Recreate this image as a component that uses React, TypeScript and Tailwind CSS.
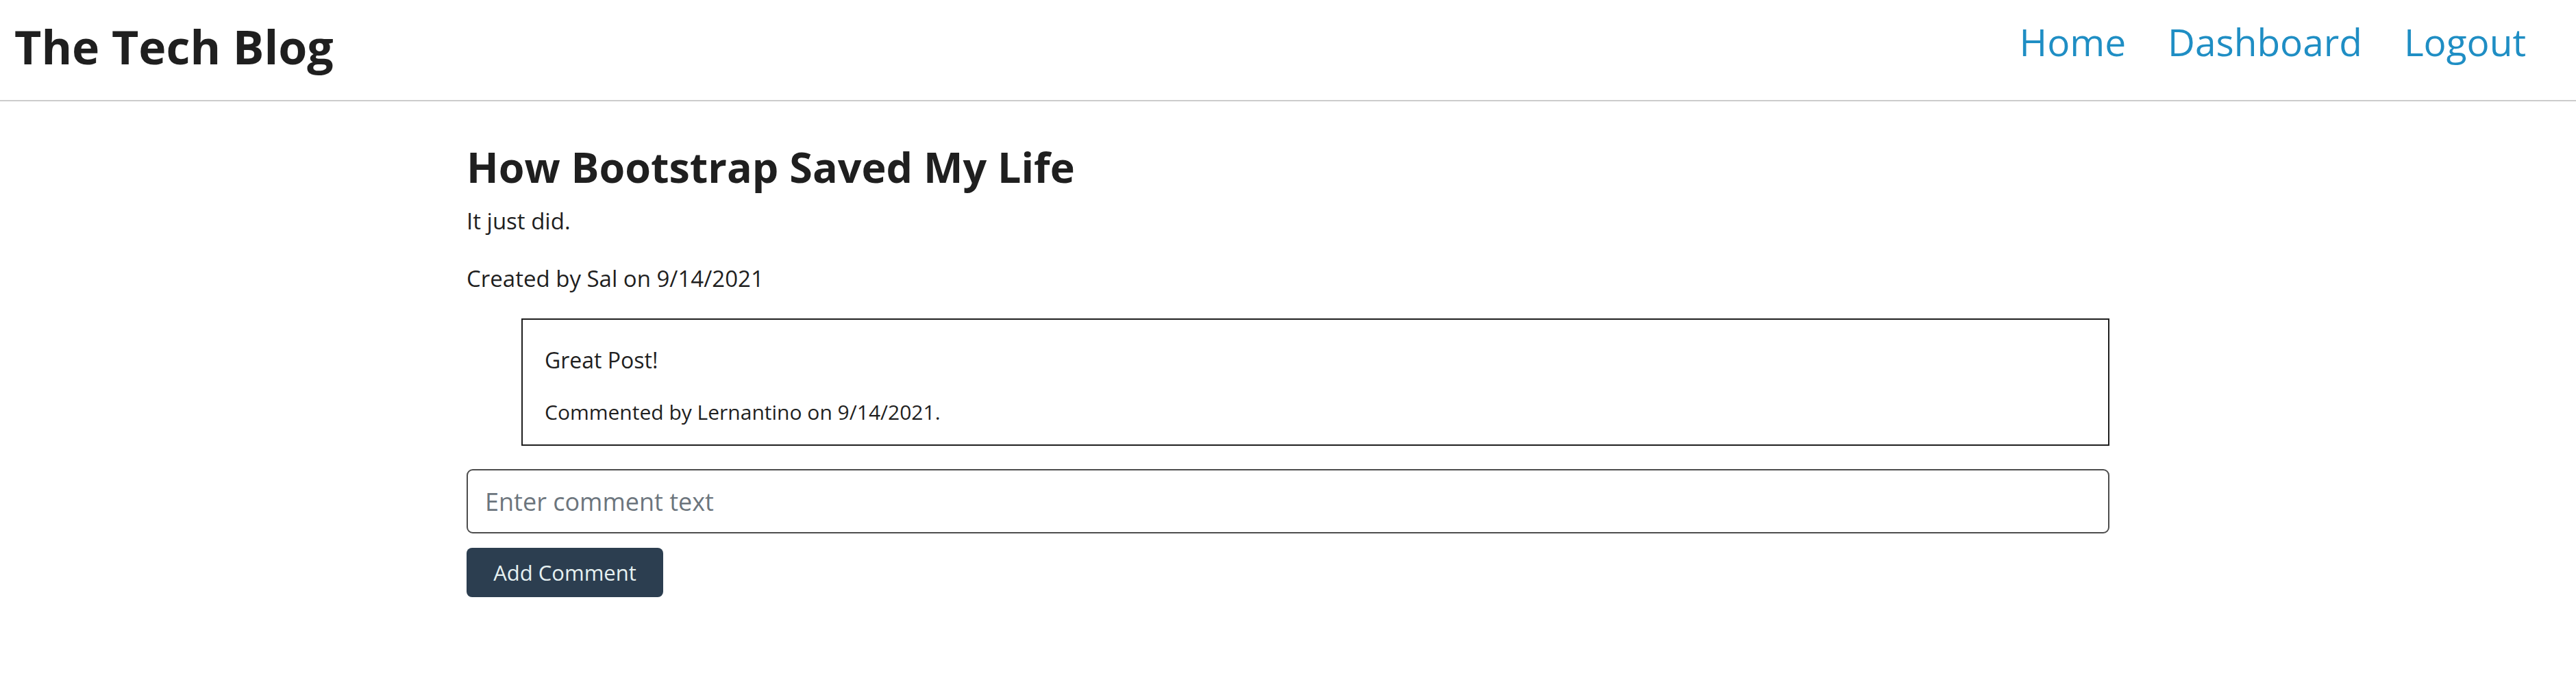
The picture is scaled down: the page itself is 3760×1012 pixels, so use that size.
import React, { useState } from 'react';

const font = { fontFamily: '"Open Sans", "Noto Sans", sans-serif' };

const Header: React.FC = () => (
  <header className="flex h-[148px] items-start justify-between border-b-2 border-[#cccccc] pl-[21px] pr-[73px] pt-[33px]">
    <h1 className="pt-[1px] text-[68px] font-bold leading-none text-[#1f1f1f]">The Tech Blog</h1>
    <nav className="flex gap-[61px] text-[55px] leading-none text-[#1f8ec4]">
      <a href="#">Home</a>
      <a href="#">Dashboard</a>
      <a href="#">Logout</a>
    </nav>
  </header>
);

const App: React.FC = () => {
  const [text, setText] = useState<string>('');

  return (
    <div className="min-h-screen bg-white text-[#1f1f1f]" style={font}>
      <Header />

      <main className="mx-auto flex w-[2398px] flex-col">
        {/* Post */}
        <h2 className="mt-[59px] text-[61px] font-bold leading-[74px]">How Bootstrap Saved My Life</h2>
        <p className="mt-[18px] text-[33px] leading-[48px]">It just did.</p>
        <p className="mt-[36px] text-[33px] leading-[48px]">Created by Sal on 9/14/2021</p>

        {/* Comments */}
        <div className="ml-[80px] mt-[34px] border-2 border-[#1f1f1f] pb-[25px] pl-[32px] pt-[35px]">
          <p className="text-[32px] leading-[48px]">Great Post!</p>
          <p className="mt-[29px] text-[30px] leading-[45px]">Commented by Lernantino on 9/14/2021.</p>
        </div>

        {/* New comment */}
        <form className="flex flex-col" onSubmit={(e) => e.preventDefault()}>
          <input
            type="text"
            value={text}
            onChange={(e) => setText(e.target.value)}
            placeholder="Enter comment text"
            className="mt-[34px] h-[94px] w-full rounded-[9px] border-2 border-[#4d4d4d] pl-[25px] text-[36px] text-[#1f1f1f] placeholder-[#6c757d] outline-none"
          />
          <button
            type="submit"
            className="mt-[21px] flex h-[72px] w-[287px] items-center justify-center rounded-[8px] bg-[#2c3e50] text-[31px] text-[#e6f1f1]"
          >
            Add Comment
          </button>
        </form>
      </main>
    </div>
  );
};

export default App;
